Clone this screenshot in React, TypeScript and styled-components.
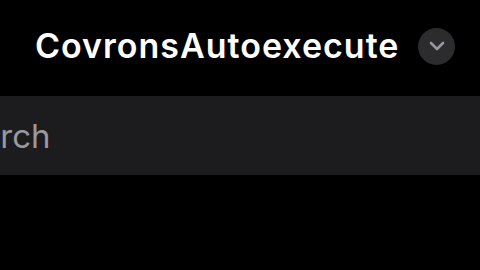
import React from "react";
import styled, { createGlobalStyle } from "styled-components";

const Global = createGlobalStyle`
  html, body { margin: 0; padding: 0; background: #000; }
  body { width: 480px; height: 270px; overflow: hidden; font-family: Inter, "Noto Sans", sans-serif; }
`;

const Screen = styled.div`
  width: 480px;
  height: 270px;
  background: #000;
  overflow: hidden;
  display: flex;
  flex-direction: column;
`;

const Header = styled.div`
  height: 96px;
  display: flex;
  align-items: center;
  padding-left: 35px;
  gap: 19px;
  box-sizing: border-box;
  padding-bottom: 4px;
`;

const Title = styled.h1`
  margin: 0;
  color: #fff;
  font-family: Inter, "Noto Sans", sans-serif;
  font-weight: 600;
  font-size: 34px;
  letter-spacing: 1px;
  line-height: 1;
  white-space: nowrap;
`;

const Circle = styled.button`
  flex: none;
  width: 37px;
  height: 37px;
  border-radius: 50%;
  border: none;
  padding: 0;
  background: #2c2c2e;
  display: flex;
  align-items: center;
  justify-content: center;
`;

const SearchBar = styled.div`
  height: 79px;
  margin-left: -80px;
  width: 600px;
  background: #1c1c1e;
  display: flex;
  align-items: center;
  padding-left: 21px;
  box-sizing: border-box;
`;

const SearchText = styled.span`
  color: #98989f;
  font-family: Inter, "Noto Sans", sans-serif;
  font-size: 33px;
  font-weight: 400;
`;

export default function App() {
  return (
    <>
      <Global />
      <Screen>
        <Header>
          <Title>CovronsAutoexecute</Title>
          <Circle aria-label="expand">
            <svg width="16" height="10" viewBox="0 0 16 10">
              <path d="M2 2 L8 8 L14 2" fill="none" stroke="#98989f" strokeWidth="2.6" strokeLinecap="round" strokeLinejoin="round" />
            </svg>
          </Circle>
        </Header>
        <SearchBar>
          <SearchText>Search</SearchText>
        </SearchBar>
      </Screen>
    </>
  );
}
